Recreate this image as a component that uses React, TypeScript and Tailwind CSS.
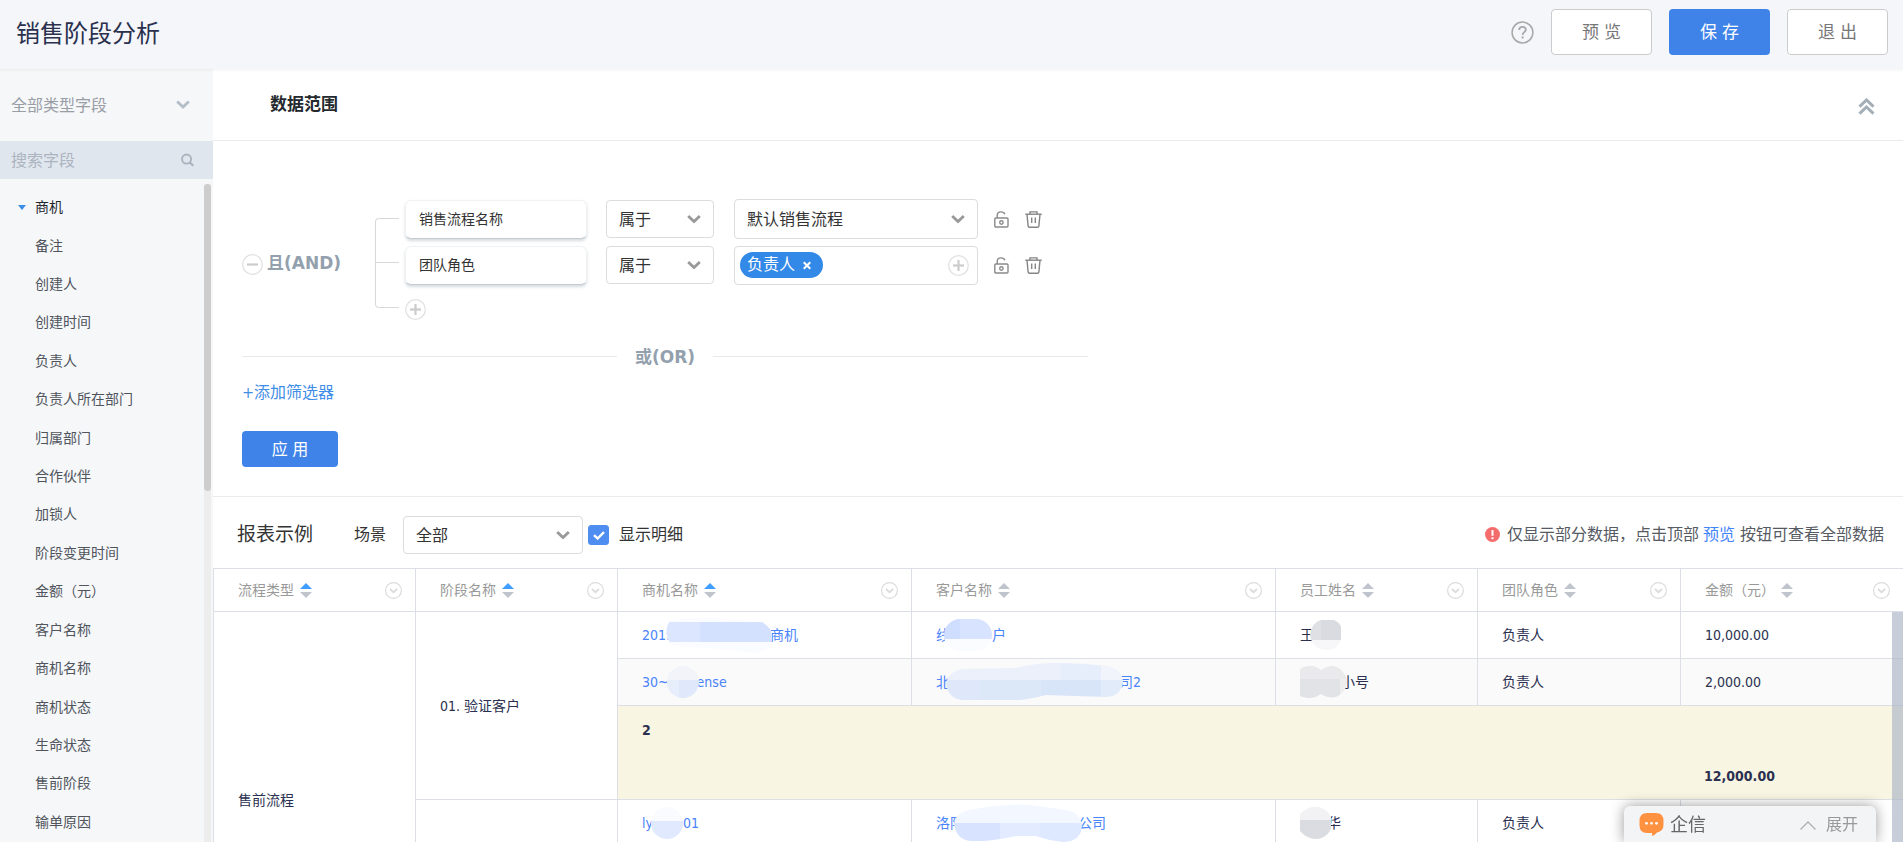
import { useId, useState } from "react";
import type { ReactNode } from "react";

type Tint = { x: number; y: number; w: number; h: number; fill: string };

type MaskShape = {
  width: number;
  height: number;
  path: string;
  tints: Tint[];
};

const fields = [
  "备注",
  "创建人",
  "创建时间",
  "负责人",
  "负责人所在部门",
  "归属部门",
  "合作伙伴",
  "加锁人",
  "阶段变更时间",
  "金额（元）",
  "客户名称",
  "商机名称",
  "商机状态",
  "生命状态",
  "售前阶段",
  "输单原因",
];

const columns = [
  { label: "流程类型", sorted: true, width: "w-[202px]" },
  { label: "阶段名称", sorted: true, width: "w-[202px]" },
  { label: "商机名称", sorted: true, width: "w-[294px]" },
  { label: "客户名称", sorted: false, width: "w-[364px]" },
  { label: "员工姓名", sorted: false, width: "w-[202px]" },
  { label: "团队角色", sorted: false, width: "w-[203px]" },
  { label: "金额（元）", sorted: false, width: "" },
];

// Shapes that hide the private part of a name
const masks: Record<string, MaskShape> = {
  dealA: {
    width: 106,
    height: 36,
    path: "M4 4Q20 -1 44 1T96 5Q106 11 106 19Q104 35 90 36Q70 33 34 31T4 26Q-3 14 4 4Z",
    tints: [
      { x: 0, y: 0, w: 106, h: 36, fill: "#fbfcff" },
      { x: 0, y: 5, w: 34, h: 20, fill: "#dce7ff" },
      { x: 34, y: 5, w: 72, h: 20, fill: "#d4e1fe" },
    ],
  },
  dealB: {
    width: 32,
    height: 32,
    path: "M16 0A16 16 0 0 1 16 32A16 16 0 0 1 16 0Z",
    tints: [
      { x: 0, y: 0, w: 32, h: 14, fill: "#f2f4fa" },
      { x: 0, y: 14, w: 12, h: 18, fill: "#e6edfb" },
      { x: 12, y: 14, w: 20, h: 18, fill: "#dfe9fb" },
    ],
  },
  dealC: {
    width: 32,
    height: 32,
    path: "M16 0A16 16 0 0 1 16 32A16 16 0 0 1 16 0Z",
    tints: [
      { x: 0, y: 0, w: 32, h: 14, fill: "#fafbff" },
      { x: 0, y: 14, w: 32, h: 18, fill: "#e0e9fe" },
    ],
  },
  customerA: {
    width: 48,
    height: 32,
    path: "M16 0H32A16 16 0 0 1 32 32H16A16 16 0 0 1 16 0Z",
    tints: [
      { x: 0, y: 0, w: 16, h: 20, fill: "#cfdeff" },
      { x: 16, y: 0, w: 32, h: 20, fill: "#d7e3ff" },
      { x: 0, y: 20, w: 48, h: 12, fill: "#fafcff" },
    ],
  },
  customerB: {
    width: 177,
    height: 38,
    path: "M16 6L70 5Q88 0 110 0Q135 0 162 3Q176 7 177 18Q176 33 160 34L100 32Q80 37 72 37H18Q3 37 0 21Q2 9 16 6Z",
    tints: [
      { x: 0, y: 0, w: 115, h: 17, fill: "#ebf0fb" },
      { x: 115, y: 0, w: 40, h: 17, fill: "#e7eefb" },
      { x: 155, y: 0, w: 22, h: 17, fill: "#f1f4fb" },
      { x: 0, y: 17, w: 35, h: 21, fill: "#dfe8fa" },
      { x: 35, y: 17, w: 60, h: 21, fill: "#dce7f8" },
      { x: 95, y: 17, w: 60, h: 21, fill: "#d8e4f8" },
      { x: 155, y: 17, w: 22, h: 21, fill: "#e2ebfa" },
    ],
  },
  customerC: {
    width: 128,
    height: 38,
    path: "M14 6L40 2Q66 -1 84 2L112 6Q126 8 128 22Q127 37 110 38Q96 37 82 32H62Q44 36 30 37H16Q2 35 0 20Q3 8 14 6Z",
    tints: [
      { x: 0, y: 0, w: 128, h: 19, fill: "#f3f7ff" },
      { x: 0, y: 19, w: 46, h: 19, fill: "#d8e4ff" },
      { x: 46, y: 19, w: 40, h: 19, fill: "#e2ebff" },
      { x: 86, y: 19, w: 42, h: 19, fill: "#dee8fe" },
    ],
  },
  staffA: {
    width: 31,
    height: 30,
    path: "M11 0H24Q31 3 31 8V20Q27 30 16 30Q2 29 0 15Q1 3 11 0Z",
    tints: [
      { x: 0, y: 0, w: 11, h: 20, fill: "#dfe0e4" },
      { x: 11, y: 0, w: 20, h: 20, fill: "#dadbe1" },
      { x: 0, y: 20, w: 31, h: 10, fill: "#f7f7fa" },
    ],
  },
  staffB: {
    width: 47,
    height: 32,
    path: "M0 3Q12 -4 21 4Q34 -5 43 6Q51 16 43 26Q34 36 21 28Q12 35 0 30Z",
    tints: [
      { x: 0, y: 0, w: 47, h: 13, fill: "#eaeaec" },
      { x: 0, y: 13, w: 40, h: 19, fill: "#e2e3e6" },
      { x: 40, y: 13, w: 7, h: 19, fill: "#eeeeef" },
    ],
  },
  staffC: {
    width: 31,
    height: 32,
    path: "M0 7Q8 -1 16 0A16 16 0 0 1 16 32Q7 32 0 24Z",
    tints: [
      { x: 0, y: 0, w: 31, h: 13, fill: "#f2f2f4" },
      { x: 0, y: 13, w: 31, h: 19, fill: "#dbdce2" },
    ],
  },
};

function Mask({ name, className = "" }: { name: string; className?: string }) {
  const id = useId();
  const shape = masks[name];
  return (
    <svg
      width={shape.width}
      height={shape.height}
      className={`relative shrink-0 ${className}`}
      aria-hidden="true"
    >
      <clipPath id={id}>
        <path d={shape.path} />
      </clipPath>
      <g clipPath={`url(#${id})`} shapeRendering="crispEdges">
        {shape.tints.map((t, i) => (
          <rect key={i} x={t.x} y={t.y} width={t.w} height={t.h} fill={t.fill} />
        ))}
      </g>
    </svg>
  );
}

function Chevron({ className = "" }: { className?: string }) {
  return (
    <svg width="14" height="9" viewBox="0 0 14 9" fill="none" className={className} aria-hidden="true">
      <path d="M1.2 1.4L7 7L12.8 1.4" stroke="currentColor" strokeWidth="2.8" />
    </svg>
  );
}

function CircleIcon({ plus }: { plus?: boolean }) {
  return (
    <svg width="21" height="21" viewBox="0 0 21 21" fill="none" aria-hidden="true">
      <circle cx="10.5" cy="10.5" r="9.8" stroke="#e2e2e2" strokeWidth="1.3" />
      <path d="M5 10.5H16" stroke="#ccc" strokeWidth="2.2" />
      {plus && <path d="M10.5 5V16" stroke="#ccc" strokeWidth="2.2" />}
    </svg>
  );
}

function LockIcon() {
  return (
    <svg width="15" height="17" viewBox="0 0 15 17" fill="none" stroke="#8a8a8a" strokeWidth="1.4" aria-hidden="true">
      <rect x="0.8" y="7" width="13.2" height="9" rx="1" />
      <path d="M3.2 7V4.600C3.2 2.400 4.800 0.900 7 0.900C9 0.900 10.300 1.700 10.800 3.200" />
      <circle cx="7.4" cy="11.5" r="1.7" />
    </svg>
  );
}

function TrashIcon() {
  return (
    <svg width="17" height="17" viewBox="0 0 17 17" fill="none" stroke="#858585" strokeWidth="1.4" aria-hidden="true">
      <path d="M0.3 3.2H16.7" />
      <path d="M5 3V0.9H12V3" />
      <path d="M2 3.2L3.1 14.9Q3.2 16.2 4.5 16.2H12.5Q13.8 16.2 13.9 14.9L15 3.2" />
      <path d="M6.7 6.5V12M10.3 6.5V12" />
    </svg>
  );
}

function SortIcon({ active }: { active: boolean }) {
  return (
    <svg width="12" height="15" viewBox="0 0 12 15" aria-hidden="true">
      <path d="M6 0L12 6H0Z" fill={active ? "#409eff" : "#c0c4cc"} />
      <path d="M0 9H12L6 15Z" fill="#c0c4cc" />
    </svg>
  );
}

function ColumnMenuIcon() {
  return (
    <svg width="17" height="17" viewBox="0 0 17 17" fill="none" stroke="#dcdcdc" aria-hidden="true">
      <circle cx="8.5" cy="8.5" r="7.9" strokeWidth="1.2" />
      <path d="M5 7L8.5 10.3L12 7" strokeWidth="1.9" />
    </svg>
  );
}

function Dropdown({
  label,
  options,
  className,
}: {
  label: string;
  options: string[];
  className: string;
}) {
  return (
    <div className={`relative shrink-0 ${className}`}>
      <select
        aria-label={label}
        className="h-full w-full appearance-none rounded border border-[#dcdcdc] bg-white pt-0.5 pl-3 text-base text-[#333]"
      >
        {options.map((o) => (
          <option key={o}>{o}</option>
        ))}
      </select>
      <Chevron className="pointer-events-none absolute top-1/2 right-[13px] -translate-y-1/2 text-[#999]" />
    </div>
  );
}

function Condition({ field, children }: { field: string; children: ReactNode }) {
  return (
    <div className="flex h-10 items-center">
      <div className="mr-[19px] flex h-[39px] w-[182px] items-center rounded-md border border-[#f0f2f3] border-b-[#c5cbd0] bg-white px-[13px] text-sm text-[#333] shadow-[0_2px_3px_rgba(120,140,150,0.3)]">
        {field}
      </div>
      <Dropdown label={`${field}条件`} options={["属于", "不属于"]} className="mr-5 h-[38px] w-[108px]" />
      {children}
      <div className="ml-4 flex items-center gap-4">
        <button aria-label="锁定">
          <LockIcon />
        </button>
        <button aria-label="删除">
          <TrashIcon />
        </button>
      </div>
    </div>
  );
}

function Cell({ children, className = "" }: { children?: ReactNode; className?: string }) {
  return (
    <td className={`border-b border-l border-[#dcdfe6] p-0 pl-6 ${className}`}>
      <div className="flex h-[46px] items-center whitespace-nowrap">{children}</div>
    </td>
  );
}

function DealLink({ children }: { children: ReactNode }) {
  return (
    <a href="#" className="flex h-[46px] items-center text-[#4a83fb]">
      {children}
    </a>
  );
}

function Sidebar() {
  return (
    <aside className="flex w-[213px] shrink-0 flex-col overflow-hidden bg-[#f5f7f9]">
      <div className="relative h-[72px] shrink-0">
        <select
          aria-label="字段类型"
          className="h-full w-full appearance-none pt-0.5 pl-[11px] text-base text-[#999da5]"
        >
          <option>全部类型字段</option>
        </select>
        <Chevron className="pointer-events-none absolute top-[31px] right-[23px] text-[#b4bec8]" />
      </div>
      <div className="flex h-[38px] shrink-0 items-center bg-[#e0e6ee] pr-[19px] pl-[11px]">
        <input
          aria-label="搜索字段"
          placeholder="搜索字段"
          className="w-full min-w-0 pt-0.5 text-base text-[#333] outline-none placeholder:text-[#abb4c0]"
        />
        <svg width="14" height="14" viewBox="0 0 14 14" fill="none" stroke="#a9b3bd" aria-hidden="true">
          <circle cx="6" cy="6" r="4.9" strokeWidth="2" />
          <path d="M9.6 9.6L13.2 13.2" strokeWidth="2.4" />
        </svg>
      </div>
      <div className="flex min-h-0 flex-1 overflow-hidden">
        <ul className="mt-[9px] grid h-[653px] flex-1 auto-rows-fr text-sm text-[#50545c]">
          <li className="flex items-center pl-[18px] text-[#24272d]">
            <svg width="8" height="5" viewBox="0 0 8 5" className="mr-[9px]" aria-hidden="true">
              <path d="M0 0H8L4 5Z" fill="#3a8ee6" />
            </svg>
            商机
          </li>
          {fields.map((f) => (
            <li key={f} className="flex items-center pl-[35px]">
              {f}
            </li>
          ))}
        </ul>
        <div className="mt-[5px] mr-[2px] w-[7px] bg-[#ededed]">
          <div className="h-[307px] rounded-full bg-[#cdcdcd]" />
        </div>
      </div>
    </aside>
  );
}

function FilterPanel() {
  return (
    <section className="border-b border-[#ebebeb]">
      <div className="flex h-[72px] items-center justify-between border-b border-[#ebebeb] pr-7 pl-[57px]">
        <h2 className="text-[17px] font-bold text-[#24292e]">数据范围</h2>
        <button aria-label="收起" className="mt-1">
          <svg width="17" height="17" viewBox="0 0 17 17" fill="none" stroke="#a3aeb7" strokeWidth="3" aria-hidden="true">
            <path d="M1.5 8.6L8.5 2L15.5 8.6" />
            <path d="M1.5 15.6L8.5 9L15.5 15.6" />
          </svg>
        </button>
      </div>

      <div className="px-[29px] pt-[58px] pb-[29px]">
        <div className="flex items-start">
          <div className="mt-[54px] flex h-[22px] w-[133px] items-center gap-1">
            <button aria-label="删除条件组">
              <CircleIcon />
            </button>
            <span className="font-['DejaVu_Sans','Noto_Sans_CJK_SC',sans-serif] text-[17px] font-bold text-[#93a0ad]">
              且(AND)
            </span>
          </div>
          <div className="mt-[19px] mr-[6px] w-6">
            <div className="h-11 rounded-tl border-t border-l border-[#d8d8d8]" />
            <div className="h-[46px] rounded-bl border-t border-b border-l border-[#d8d8d8]" />
          </div>
          <div className="flex flex-col gap-1.5">
            <Condition field="销售流程名称">
              <Dropdown label="销售流程" options={["默认销售流程"]} className="h-10 w-[244px]" />
            </Condition>
            <Condition field="团队角色">
              <div className="flex h-[39px] w-[244px] items-center justify-between rounded border border-[#dcdcdc] pr-2 pl-[5px]">
                <span className="flex h-[26px] items-center gap-2 rounded-full bg-[#3389e8] pr-3 pl-[7px] text-base leading-6 text-white">
                  负责人
                  <button aria-label="移除负责人">
                    <svg width="8" height="9" viewBox="0 0 9 9" stroke="#fff" strokeWidth="2.4" aria-hidden="true">
                      <path d="M0.8 0.8L8.2 8.2M8.2 0.8L0.8 8.2" />
                    </svg>
                  </button>
                </span>
                <button aria-label="添加角色">
                  <CircleIcon plus />
                </button>
              </div>
            </Condition>
            <button aria-label="添加条件" className="mt-2 w-[21px]">
              <CircleIcon plus />
            </button>
          </div>
        </div>

        <div className="mt-[23px] flex max-w-[846px] items-center gap-[18px] font-['DejaVu_Sans','Noto_Sans_CJK_SC',sans-serif] text-[17px] leading-6 font-bold text-[#93a0ad]">
          <span className="h-px flex-1 bg-[#e9e9e9]" />
          <span className="pt-0.5">或(OR)</span>
          <span className="h-px flex-1 bg-[#e9e9e9]" />
        </div>

        <button className="mt-3 block text-base leading-6 text-[#3f8ee8]">+添加筛选器</button>
        <button className="mt-[26px] block h-9 w-24 rounded bg-[#3f83e9] pt-0.5 text-base text-white">
          应 用
        </button>
      </div>
    </section>
  );
}

function ReportTable() {
  return (
    <div className="relative min-h-0 flex-1 overflow-hidden">
      <table className="w-full table-fixed border-separate border-spacing-0 text-sm text-[#2b3050]">
        <thead>
          <tr>
            {columns.map((c) => (
              <th
                key={c.label}
                className={`border-y border-l border-[#dcdfe6] p-0 pr-[13px] pl-6 font-normal text-[#999] ${c.width}`}
              >
                <div className="flex h-[42px] items-center gap-1.5 whitespace-nowrap">
                  {c.label}
                  <button aria-label={`按${c.label}排序`}>
                    <SortIcon active={c.sorted} />
                  </button>
                  <button aria-label={`${c.label}菜单`} className="ml-auto">
                    <ColumnMenuIcon />
                  </button>
                </div>
              </th>
            ))}
          </tr>
        </thead>
        <tbody>
          <tr>
            <td rowSpan={8} className="border-b border-l border-[#dcdfe6] p-0 pl-6">
              售前流程
            </td>
            <td rowSpan={4} className="border-b border-l border-[#dcdfe6] p-0 pl-6">
              01. 验证客户
            </td>
            <Cell>
              <DealLink>
                2019
                <Mask name="dealA" className="-mr-0.5 -ml-2" />
                商机
              </DealLink>
            </Cell>
            <Cell>
              <DealLink>
                线
                <Mask name="customerA" className="-ml-1.5" />户
              </DealLink>
            </Cell>
            <Cell>
              王
              <Mask name="staffA" className="-ml-1" />
            </Cell>
            <Cell>负责人</Cell>
            <Cell>10,000.00</Cell>
          </tr>
          <tr className="bg-[#fafafa]">
            <Cell>
              <DealLink>
                30~
                <Mask name="dealB" className="-mr-0.5 -ml-0.5" />
                ense
              </DealLink>
            </Cell>
            <Cell>
              <DealLink>
                北
                <Mask name="customerB" className="-mr-1 -ml-1" />
                司2
              </DealLink>
            </Cell>
            <Cell>
              <Mask name="staffB" className="-mr-1.5" />
              小号
            </Cell>
            <Cell>负责人</Cell>
            <Cell>2,000.00</Cell>
          </tr>
          <tr className="h-[47px] bg-[#f8f5e2] font-bold">
            <td colSpan={5} className="border-l border-[#dcdfe6] p-0 pl-6">
              2
            </td>
          </tr>
          <tr className="bg-[#f8f5e2] font-bold">
            <td colSpan={4} className="border-b border-l border-[#dcdfe6]" />
            <td className="border-b border-[#dcdfe6] p-0 pl-6">
              <div className="flex h-[46px] items-center">12,000.00</div>
            </td>
          </tr>
          <tr>
            <td rowSpan={4} className="border-b border-l border-[#dcdfe6]" />
            <Cell>
              <DealLink>
                ly
                <Mask name="dealC" className="-ml-0.5" />
                01
              </DealLink>
            </Cell>
            <Cell>
              <DealLink>
                洛阳
                <Mask name="customerC" className="-mr-1 -ml-2.5" />
                公司
              </DealLink>
            </Cell>
            <Cell>
              <Mask name="staffC" className="-mr-1" />华
            </Cell>
            <Cell>负责人</Cell>
            <Cell />
          </tr>
          {[0, 1, 2].map((n) => (
            <tr key={n}>
              <Cell />
              <Cell />
              <Cell />
              <Cell />
              <Cell />
            </tr>
          ))}
        </tbody>
      </table>
      <div className="absolute top-11 right-0 bottom-0 w-[11px] bg-[#aab4c4]/65" />
    </div>
  );
}

function ReportPanel() {
  const [detail, setDetail] = useState(true);

  return (
    <section className="flex min-h-0 flex-1 flex-col">
      <div className="flex h-[71px] shrink-0 items-center pt-1 pr-[19px] pl-6 whitespace-nowrap text-[#333]">
        <h2 className="mr-[41px] text-[19px]">报表示例</h2>
        <span className="mr-[17px] text-base">场景</span>
        <Dropdown label="场景" options={["全部"]} className="mr-[5px] h-[38px] w-[180px]" />
        <label className="flex items-center gap-2.5 text-base">
          <span className="relative flex">
            <input
              type="checkbox"
              checked={detail}
              onChange={() => setDetail(!detail)}
              className="h-5 w-[21px] appearance-none rounded-[3px] border border-[#c5cbd5] checked:border-[#508df0] checked:bg-[#508df0]"
            />
            {detail && (
              <svg
                width="12"
                height="9"
                viewBox="0 0 12 9"
                fill="none"
                className="pointer-events-none absolute top-1.5 left-[5px]"
                aria-hidden="true"
              >
                <path d="M1 4.2L4.6 7.5L11 1.2" stroke="#fff" strokeWidth="2.4" />
              </svg>
            )}
          </span>
          显示明细
        </label>
        <p className="ml-auto flex items-center text-base text-[#555a63]">
          <svg width="15" height="15" viewBox="0 0 15 15" className="mr-[7px]" aria-hidden="true">
            <circle cx="7.5" cy="7.5" r="7.5" fill="#f56c6c" />
            <path d="M7.5 3V8.8" stroke="#fff" strokeWidth="2" />
            <path d="M7.5 10.2V12.2" stroke="#fff" strokeWidth="2" />
          </svg>
          仅显示部分数据，点击顶部
          <a href="#" className="mr-[5px] ml-1 text-[#3f83fa]">
            预览
          </a>
          按钮可查看全部数据
        </p>
      </div>
      <ReportTable />
    </section>
  );
}

export default function App() {
  return (
    <div className="flex h-screen flex-col overflow-hidden bg-white font-['DejaVu_Sans_Condensed','Noto_Sans_CJK_SC',sans-serif]">
      <header className="z-10 flex h-[69px] shrink-0 items-center justify-between bg-[#f4f6fa] pr-[15px] pb-[5px] pl-4 shadow-[0_1px_3px_rgba(0,0,0,0.06)]">
        <h1 className="pt-1 text-2xl text-[#2a304d]">销售阶段分析</h1>
        <div className="flex items-center gap-[17px] text-[17px]">
          <button aria-label="帮助">
            <svg width="23" height="23" viewBox="0 0 23 23" fill="none" stroke="#a8a8a8" aria-hidden="true">
              <circle cx="11.5" cy="11.5" r="10.4" strokeWidth="1.5" />
              <path
                d="M8.2 9C8.2 7 9.5 5.9 11.5 5.9C13.5 5.9 14.8 7.1 14.8 8.8C14.8 11 11.6 11.3 11.6 13.9"
                strokeWidth="1.8"
              />
              <path d="M11.6 15.4V17.4" strokeWidth="2" />
            </svg>
          </button>
          <button className="h-[46px] w-[101px] rounded border border-[#ccc] bg-white pt-0.5 text-[#777]">
            预 览
          </button>
          <button className="h-[46px] w-[101px] rounded bg-[#3f83e9] pt-0.5 text-white">保 存</button>
          <button className="h-[46px] w-[101px] rounded border border-[#ccc] bg-white pt-0.5 text-[#777]">
            退 出
          </button>
        </div>
      </header>

      <div className="flex min-h-0 flex-1">
        <Sidebar />
        <main className="flex min-w-0 flex-1 flex-col">
          <FilterPanel />
          <ReportPanel />
        </main>
      </div>

      <div className="fixed right-[27px] bottom-0 z-20 flex h-9 w-[252px] items-center rounded-t-md bg-[#f3f4f6] pr-[18px] pl-[15px] shadow-[0_0_14px_rgba(0,0,0,0.4)]">
        <svg width="25" height="23" viewBox="0 0 25 23" aria-hidden="true">
          <path
            d="M8 0H17Q24.5 0 24.5 8V12Q24.5 18 18 19.5Q16 22 13 23V20H8Q0.5 20 0.5 12V8Q0.5 0 8 0Z"
            fill="#ff9240"
          />
          <circle cx="7.5" cy="10.3" r="1.4" fill="#fff" />
          <circle cx="12.5" cy="10.3" r="1.4" fill="#fff" />
          <circle cx="17.5" cy="10.3" r="1.4" fill="#fff" />
        </svg>
        <span className="ml-1.5 pt-0.5 text-lg text-[#666]">企信</span>
        <button className="ml-auto flex items-center gap-2.5 pt-0.5 text-base text-[#999]">
          <svg width="16" height="9" viewBox="0 0 16 9" fill="none" stroke="#b0b0b0" strokeWidth="1.3" aria-hidden="true">
            <path d="M0.5 8.5L8 1L15.5 8.5" />
          </svg>
          展开
        </button>
      </div>
    </div>
  );
}
